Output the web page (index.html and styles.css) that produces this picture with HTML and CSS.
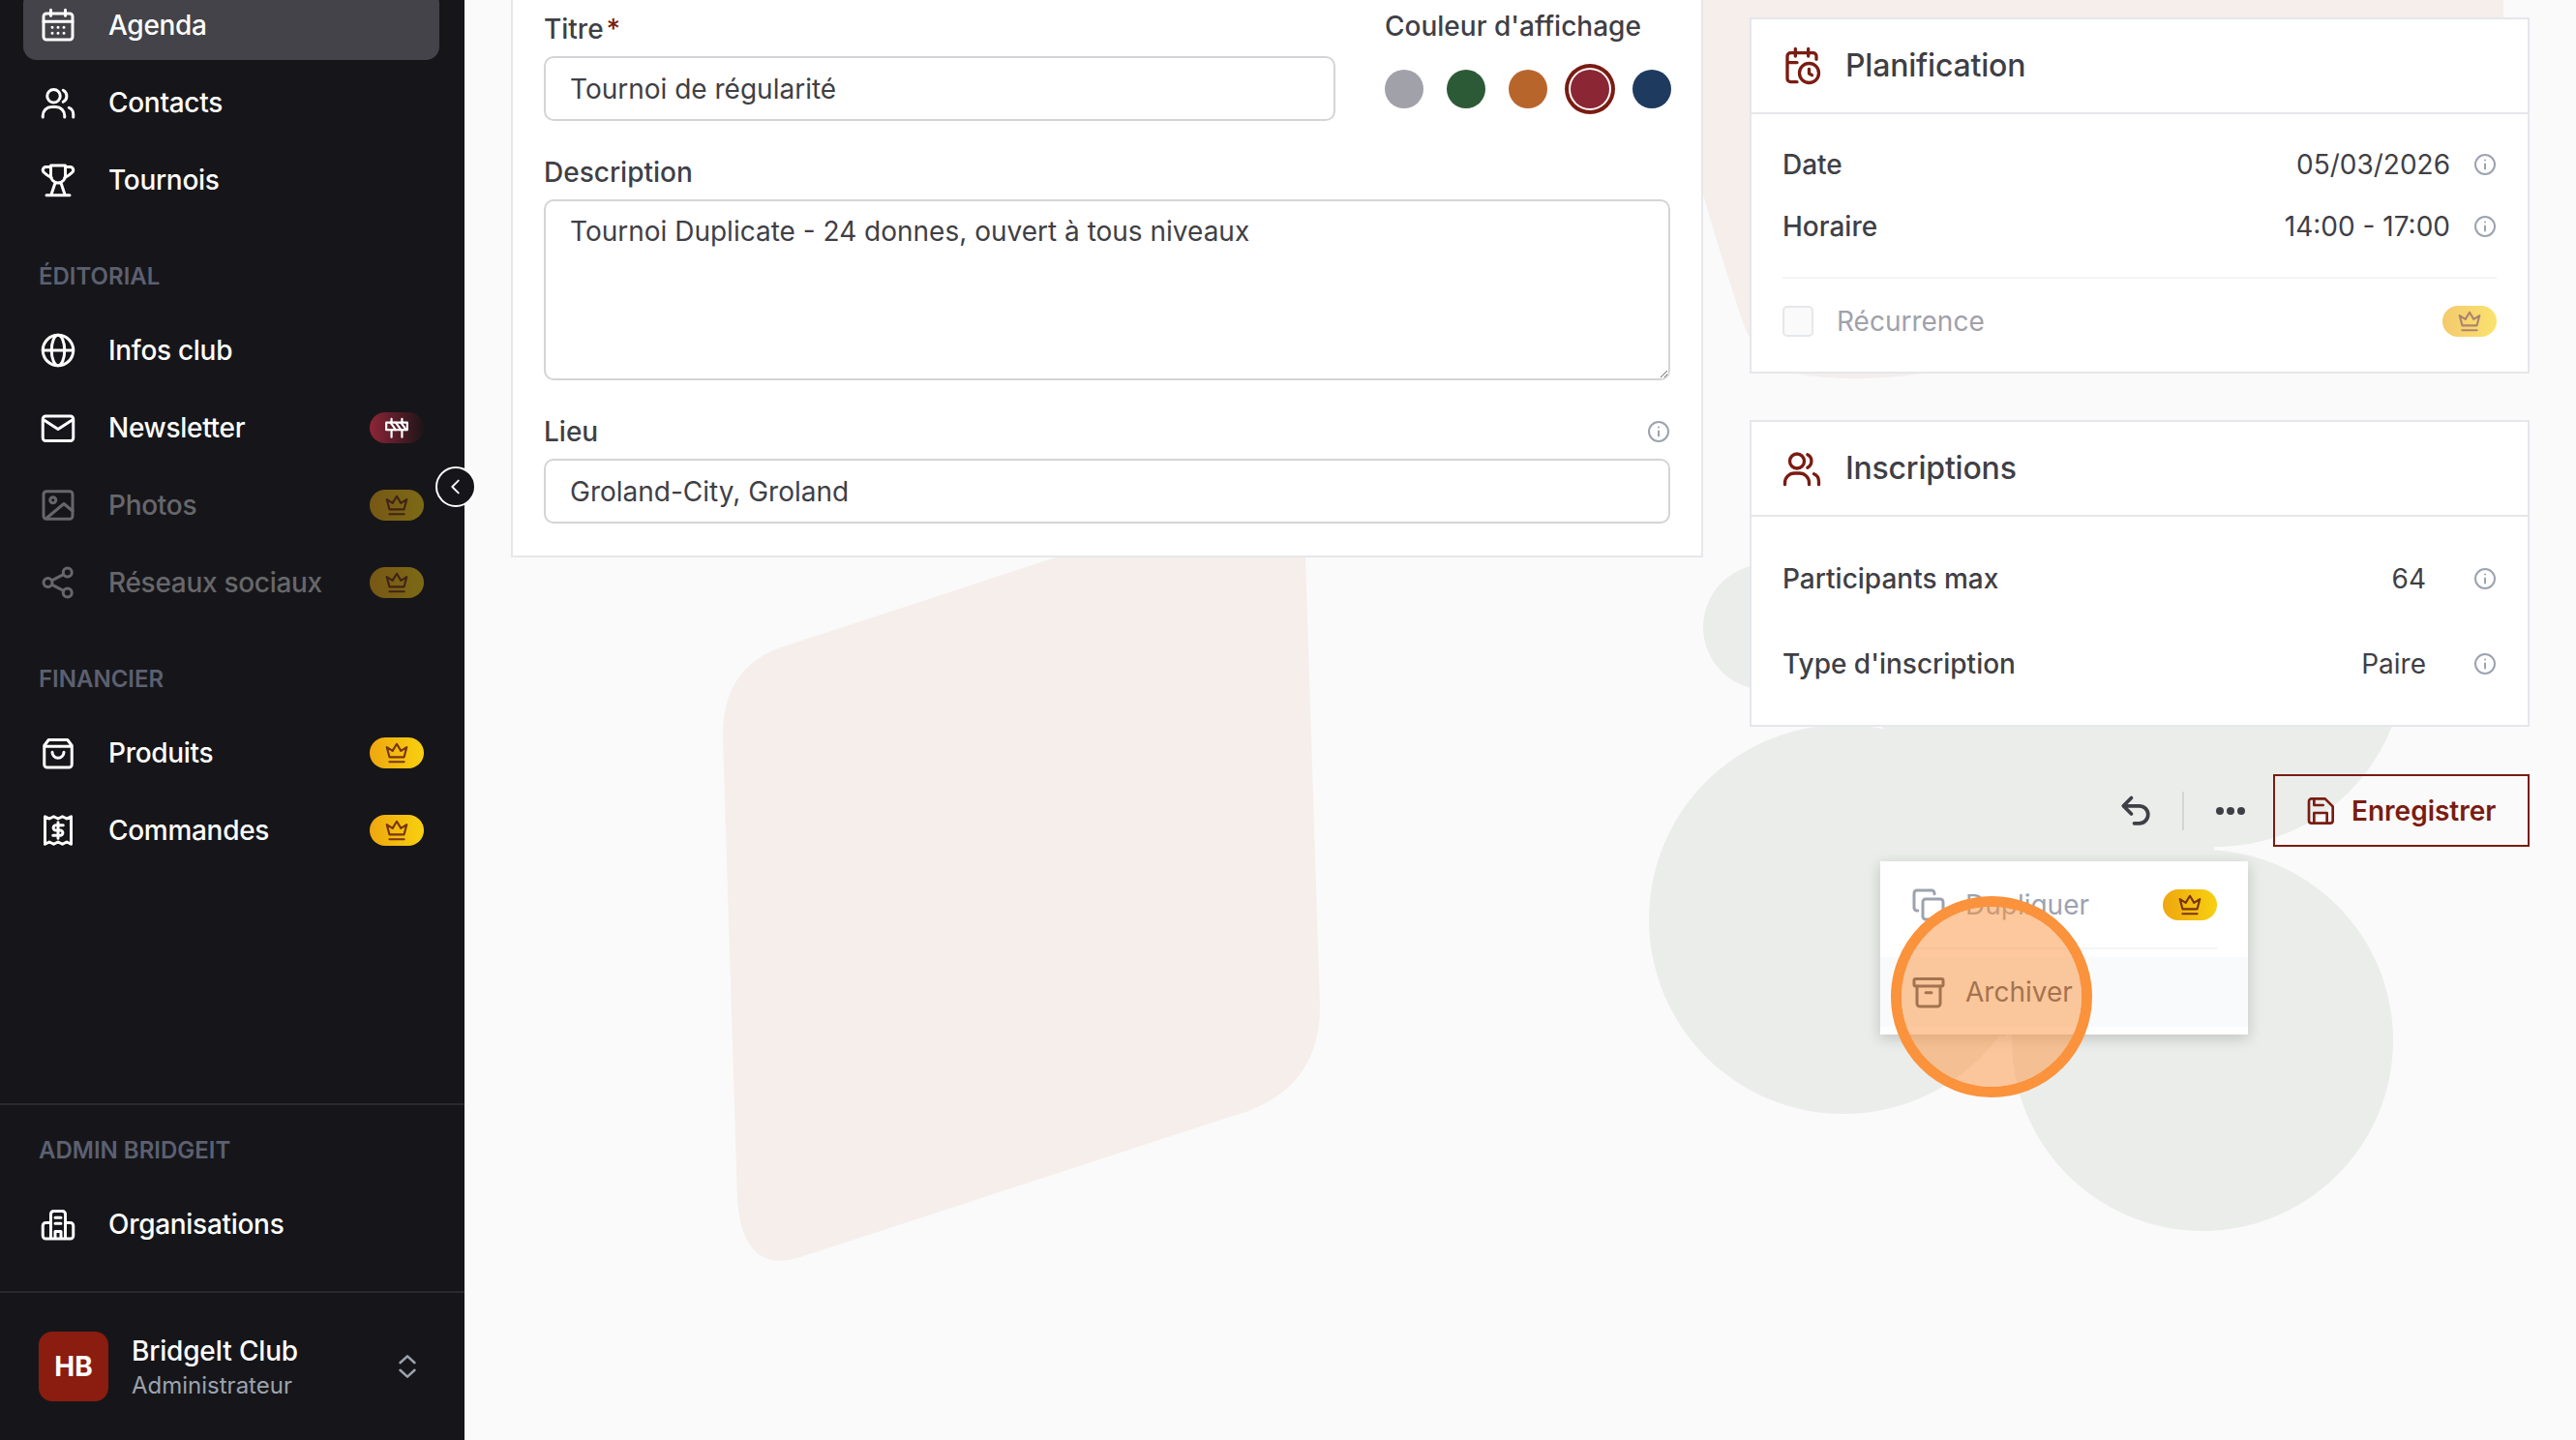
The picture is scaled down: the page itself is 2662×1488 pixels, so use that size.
FILE: index.html
```html
<!DOCTYPE html>
<html lang="fr">
<head>
  <meta charset="utf-8">
  <title>Tournoi de régularité - Agenda</title>
  <link rel="stylesheet" href="styles.css">
</head>

<body>
  <svg class="icon-defs" width="0" height="0">
    <symbol id="i-calendar" viewBox="0 0 24 24"><rect x="2" y="4" width="20" height="18" rx="2"/><path d="M7 1.500v4M17 1.500v4M2 9.500h20M8 13.500h.01M12 13.500h.01M16 13.500h.01M8 17.500h.01M12 17.500h.01M16 17.500h.01"/></symbol>
    <symbol id="i-users" viewBox="0 0 24 24"><circle cx="9" cy="7.500" r="4.500"/><path d="M15.500 3.500a4.500 4.500 0 0 1 0 8M1.500 22v-1a6 6 0 0 1 6-6h3a6 6 0 0 1 6 6v1M19.500 15.500a5 5 0 0 1 3 4.500v2"/></symbol>
    <symbol id="i-trophy" viewBox="0 0 24 24"><path d="M7 2h10v7a5 5 0 0 1-10 0zM7 3H4a2.200 2.200 0 0 0-1.500 4C4 8.500 5.500 9.300 7.500 10.500M17 3h3a2.200 2.200 0 0 1 1.500 4c-1.500 1.500-3 2.300-5 3.500M10 14l-2.500 7.500M14 14l2.500 7.500M4 22.500h16"/></symbol>
    <symbol id="i-globe" viewBox="0 0 24 24"><circle cx="12" cy="12" r="10.500"/><ellipse cx="12" cy="12" rx="4.500" ry="10.500"/><path d="M1.500 12h21"/></symbol>
    <symbol id="i-mail" viewBox="0 0 24 24"><rect x="1.500" y="4" width="21" height="17" rx="2"/><path d="M2 6.500l10 6.500 10-6.500"/></symbol>
    <symbol id="i-image" viewBox="0 0 24 24"><rect x="2" y="2.500" width="20" height="19" rx="2"/><circle cx="8.500" cy="8.500" r="2"/><path d="M4 21l12-10 6 5"/></symbol>
    <symbol id="i-share" viewBox="0 0 24 24"><circle cx="18.500" cy="5" r="3"/><circle cx="5" cy="12" r="3"/><circle cx="18.500" cy="19" r="3"/><path d="M7.700 10.600l8-4.200M7.700 13.400l8 4.200"/></symbol>
    <symbol id="i-bag" viewBox="0 0 24 24"><path d="M5.500 3h13l3 4v13a2 2 0 0 1-2 2h-15a2 2 0 0 1-2-2V7zM2.500 7.500h19M8 11.500a4 4 0 0 0 8 0"/></symbol>
    <symbol id="i-receipt" viewBox="0 0 24 24"><path d="M3 2.500l3 1.500 3-1.500 3 1.500 3-1.500 3 1.500 3-1.500v19l-3-1.500-3 1.500-3-1.500-3 1.500-3-1.500-3 1.500zM15.500 8.500h-5a1.750 1.750 0 0 0 0 3.500h3a1.750 1.750 0 0 1 0 3.500h-5M12 6.500v11"/></symbol>
    <symbol id="i-building" viewBox="0 0 24 24"><path d="M7 22V5a2 2 0 0 1 2-2h6a2 2 0 0 1 2 2v17M7 11H3.500a2 2 0 0 0-2 2v7a2 2 0 0 0 2 2h17a2 2 0 0 0 2-2v-7a2 2 0 0 0-2-2H17M10 7.500h4M10 11.500h4M10 22v-5h4v5"/></symbol>
    <symbol id="i-chevrons" viewBox="0 0 24 24"><path d="M6 9l6-5.500L18 9M6 15l6 5.500 6-5.500"/></symbol>
    <symbol id="i-crown" viewBox="0 0 24 24"><path d="M5 16L2.500 6.500 8 10l4-6.500 4 6.500 5.500-3.500L19 16zM5 20.500h14"/></symbol>
    <symbol id="i-barrier" viewBox="0 0 24 24"><rect x="2" y="7" width="20" height="7"/><path d="M7 3.500V7M17 3.500V7M7 14v7M17 14v7M6 7l5 7M11 7l5 7M16 7l5 7"/></symbol>
    <symbol id="i-info" viewBox="0 0 24 24"><circle cx="12" cy="12" r="10"/><path d="M12 11.500v5M12 7.500h.01"/></symbol>
    <symbol id="i-undo" viewBox="0 0 24 24"><path d="M9 14L3.500 8.500 9 3M4 8.500h10.500a6 6 0 0 1 0 12H11"/></symbol>
    <symbol id="i-save" viewBox="0 0 24 24"><path d="M5 2.500h10.500l6 6V19.500a2 2 0 0 1-2 2H5a2 2 0 0 1-2-2v-15a2 2 0 0 1 2-2zM7 21.500v-8h10v8M7 2.500v5h7"/></symbol>
    <symbol id="i-copy" viewBox="0 0 24 24"><rect x="8" y="8" width="14" height="14" rx="2"/><path d="M4.500 16H4a2 2 0 0 1-2-2V4a2 2 0 0 1 2-2h10a2 2 0 0 1 2 2v.500"/></symbol>
    <symbol id="i-archive" viewBox="0 0 24 24"><rect x="2" y="3" width="20" height="5" rx="1"/><path d="M4 8v12a2 2 0 0 0 2 2h12a2 2 0 0 0 2-2V8M10 12.500h4"/></symbol>
    <symbol id="i-calclock" viewBox="0 0 24 24"><path d="M21 8V6a2 2 0 0 0-2-2H5a2 2 0 0 0-2 2v14a2 2 0 0 0 2 2h4M16 1.500V6M8 1.500V6M3 10h6"/><circle cx="16.500" cy="16.500" r="6"/><path d="M16.500 14v2.800l1.800 1"/></symbol>
    <symbol id="i-left" viewBox="0 0 24 24"><path d="M15 5l-7 7 7 7"/></symbol>
  </svg>

  <svg class="backdrop" viewBox="0 0 2662 1488" width="2662" height="1488">
    <path class="blob-pink" d="M1094 575 L807 669 Q747 690 747 760 L762 1240 Q768 1320 830 1298 L1290 1148 Q1364 1120 1364 1040 L1349 575 Z"/>
    <path class="blob-pink" d="M1740 0 L2587 0 L2587 30 L2100 360 Q1950 405 1850 385 Q1815 375 1800 330 Q1770 240 1740 130 Z"/>
    <g class="blob-grey">
      <circle cx="1825" cy="648" r="65"/>
      <circle cx="1905" cy="950" r="201"/>
      <circle cx="2276" cy="1075" r="197"/>
      <circle cx="2290" cy="680" r="195"/>
      <path d="M1951 762 L1942 745 L2300 620 L2288 878 L2200 940 L2070 1072 L1950 950 Z"/>
    </g>
  </svg>

  <div class="app">
    <aside class="sidebar">
      <nav class="menu">
        <a class="item active"><svg class="icon"><use href="#i-calendar"/></svg>Agenda</a>
        <a class="item"><svg class="icon"><use href="#i-users"/></svg>Contacts</a>
        <a class="item"><svg class="icon"><use href="#i-trophy"/></svg>Tournois</a>

        <p class="menu-title">ÉDITORIAL</p>
        <a class="item"><svg class="icon"><use href="#i-globe"/></svg>Infos club</a>
        <a class="item"><svg class="icon"><use href="#i-mail"/></svg>Newsletter
          <span class="badge badge-wip"><svg><use href="#i-barrier"/></svg></span></a>
        <a class="item locked"><svg class="icon"><use href="#i-image"/></svg>Photos
          <span class="badge"><svg><use href="#i-crown"/></svg></span></a>
        <a class="item locked"><svg class="icon"><use href="#i-share"/></svg>Réseaux sociaux
          <span class="badge"><svg><use href="#i-crown"/></svg></span></a>

        <p class="menu-title">FINANCIER</p>
        <a class="item"><svg class="icon"><use href="#i-bag"/></svg>Produits
          <span class="badge"><svg><use href="#i-crown"/></svg></span></a>
        <a class="item"><svg class="icon"><use href="#i-receipt"/></svg>Commandes
          <span class="badge"><svg><use href="#i-crown"/></svg></span></a>
      </nav>

      <div class="admin">
        <p class="menu-title">ADMIN BRIDGEIT</p>
        <a class="item"><svg class="icon"><use href="#i-building"/></svg>Organisations</a>
      </div>

      <div class="account">
        <span class="avatar">HB</span>
        <div class="account-text">
          <strong>BridgeIt Club</strong>
          <small>Administrateur</small>
        </div>
        <svg class="icon chevrons"><use href="#i-chevrons"/></svg>
      </div>

      <button class="collapse"><svg><use href="#i-left"/></svg></button>
    </aside>

    <main class="content">
      <section class="card form-card">
        <div class="form-top">
          <div class="field field-title">
            <label>Titre<span class="req">*</span></label>
            <input class="input" type="text" value="Tournoi de régularité">
          </div>
          <div class="colors">
            <label>Couleur d'affichage</label>
            <div class="swatches">
              <span class="swatch sw-grey"></span>
              <span class="swatch sw-green"></span>
              <span class="swatch sw-orange"></span>
              <span class="swatch sw-red selected"></span>
              <span class="swatch sw-blue"></span>
            </div>
          </div>
        </div>
        <div class="field">
          <label>Description</label>
          <textarea class="input area">Tournoi Duplicate - 24 donnes, ouvert à tous niveaux</textarea>
        </div>
        <div class="field">
          <label class="label-row">Lieu <svg class="info"><use href="#i-info"/></svg></label>
          <input class="input" type="text" value="Groland-City, Groland">
        </div>
      </section>

      <div class="side">
        <section class="card">
          <h2 class="card-head"><svg class="icon"><use href="#i-calclock"/></svg>Planification</h2>
          <div class="card-body plan">
            <div class="row"><span>Date</span><span class="val">05/03/2026</span><svg class="info"><use href="#i-info"/></svg></div>
            <div class="row"><span>Horaire</span><span class="val">14:00 - 17:00</span><svg class="info"><use href="#i-info"/></svg></div>
            <hr>
            <div class="row recur">
              <span class="check"></span><span>Récurrence</span>
              <span class="badge badge-small"><svg><use href="#i-crown"/></svg></span>
            </div>
          </div>
        </section>

        <section class="card">
          <h2 class="card-head"><svg class="icon"><use href="#i-users"/></svg>Inscriptions</h2>
          <div class="card-body signup">
            <div class="row"><span>Participants max</span><span class="val">64</span><svg class="info"><use href="#i-info"/></svg></div>
            <div class="row"><span>Type d'inscription</span><span class="val">Paire</span><svg class="info"><use href="#i-info"/></svg></div>
          </div>
        </section>

        <div class="actions">
          <svg class="icon"><use href="#i-undo"/></svg>
          <span class="sep"></span>
          <svg class="icon dots" viewBox="0 0 36 36"><circle cx="7" cy="18" r="4"/><circle cx="18" cy="18" r="4"/><circle cx="29" cy="18" r="4"/></svg>
          <button class="save"><svg class="icon"><use href="#i-save"/></svg>Enregistrer</button>

          <div class="dropdown">
            <div class="drop-row muted">
              <svg class="icon"><use href="#i-copy"/></svg>Dupliquer
              <span class="badge"><svg><use href="#i-crown"/></svg></span>
            </div>
            <hr>
            <div class="drop-row hover">
              <svg class="icon"><use href="#i-archive"/></svg>Archiver
            </div>
          </div>
        </div>
      </div>
    </main>
  </div>

  <div class="click-marker"></div>
</body>
</html>
```

FILE: styles.css
```css
:root {
  --dark: #16161a;
  --text: #3f3f46;
  --border: #e5e7eb;
  --brand: #7a1c12;
  --muted: #9ca3af;
}

* {
  box-sizing: border-box;
}

html, body {
  margin: 0;
  height: 100%;
  overflow: hidden;
}

body {
  position: relative;
  font-family: Inter, "Noto Sans", sans-serif;
  font-size: 28px;
  line-height: 40px;
  color: var(--text);
  background: #fafafa;
}

.icon-defs {
  position: absolute;
}

symbol {
  fill: none;
  stroke: currentColor;
  stroke-width: 2;
  stroke-linecap: round;
  stroke-linejoin: round;
}

#i-undo {
  stroke-width: 2.5;
}

.backdrop {
  position: absolute;
  top: 0;
  left: 0;
}

.blob-pink {
  fill: #f5eeeb;
}

.blob-grey {
  fill: #ebedeb;
}

.app {
  position: relative;
  display: flex;
  height: 1488px;
}

.icon {
  width: 36px;
  height: 36px;
  flex: none;
}

/* sidebar */
.sidebar {
  position: relative;
  display: flex;
  flex-direction: column;
  width: 480px;
  flex: none;
  background: var(--dark);
  color: #fff;
}

.menu {
  display: flex;
  flex-direction: column;
  gap: 8px;
  margin-top: -10px;
  padding: 0 26px 0 24px;
}

.menu-title {
  margin: 40px 16px 16px;
  font-size: 24px;
  line-height: 32px;
  font-weight: 600;
  color: #5c6070;
}

.item {
  display: flex;
  align-items: center;
  gap: 34px;
  height: 72px;
  padding: 0 16px 0 18px;
  border-radius: 14px;
  font-weight: 500;
  letter-spacing: -.3px;
}

.item.active {
  background: #434349;
}

.item.locked {
  color: #67676b;
}

.badge {
  display: flex;
  align-items: center;
  justify-content: center;
  width: 56px;
  height: 32px;
  margin-left: auto;
  border-radius: 16px;
  background: linear-gradient(90deg, #eea70f, #f8d00f);
  color: #78350f;
}

.badge svg {
  width: 26px;
  height: 26px;
}

.locked .badge {
  opacity: .45;
}

.badge-wip {
  background: linear-gradient(90deg, #8f2537, #1d1518);
  color: #fff;
}

.admin {
  margin-top: auto;
  padding: 0 26px 33px 24px;
  border-top: 2px solid #2a2a2e;
}

.admin .menu-title {
  margin: 31px 16px 24px;
}

.account {
  display: flex;
  align-items: center;
  height: 154px;
  padding: 0 44px 0 40px;
  border-top: 2px solid #2a2a2e;
}

.avatar {
  display: flex;
  align-items: center;
  justify-content: center;
  width: 72px;
  height: 72px;
  border-radius: 14px;
  background: #8b1c10;
  font-weight: 700;
}

.account-text {
  display: flex;
  flex-direction: column;
  margin-left: 24px;
}

.account-text strong {
  font-weight: 500;
  line-height: 38px;
  letter-spacing: -.2px;
}

.account-text small {
  margin-top: 1px;
  font-size: 24px;
  line-height: 32px;
  color: #9ca3af;
}

.chevrons {
  margin-left: auto;
  width: 30px;
  height: 30px;
  color: #9ca3af;
}

.collapse {
  position: absolute;
  top: 482px;
  left: 450px;
  display: flex;
  align-items: center;
  justify-content: center;
  width: 42px;
  height: 42px;
  padding: 0;
  border: 2px solid #fff;
  border-radius: 50%;
  background: var(--dark);
  color: #fff;
}

.collapse svg {
  width: 22px;
  height: 22px;
}

/* main */
.content {
  display: flex;
  align-items: flex-start;
  gap: 48px;
  flex: 1;
  padding: 0 48px;
}

.card {
  border: 2px solid var(--border);
  background: #fff;
}

.form-card {
  display: flex;
  flex-direction: column;
  gap: 33px;
  width: 1232px;
  flex: none;
  margin-top: -20px;
  padding: 28px 32px 33px 32px;
}

.form-top {
  display: flex;
  gap: 51px;
}

.field label,
.colors label {
  display: block;
  margin-bottom: 8px;
  font-weight: 500;
}

.field-title {
  width: 818px;
  flex: none;
}

.req {
  margin-left: 3px;
  color: var(--brand);
}

.input {
  display: block;
  width: 100%;
  height: 67px;
  padding: 0 25px;
  border: 2px solid #d4d4d8;
  border-radius: 10px;
  background: #fff;
  font: inherit;
  color: var(--text);
}

.area {
  height: 187px;
  padding-top: 11px;
}

.label-row {
  display: flex !important;
  align-items: center;
  justify-content: space-between;
}

.info {
  width: 24px;
  height: 24px;
  flex: none;
  color: var(--muted);
}

.colors {
  margin-top: -3px;
}

.colors label {
  margin-bottom: 25px;
}

.swatches {
  display: flex;
  gap: 24px;
}

.swatch {
  width: 40px;
  height: 40px;
  border-radius: 50%;
}

.sw-grey { background: #a1a1aa; }
.sw-green { background: #2d5a36; }
.sw-orange { background: #b8652c; }
.sw-red { background: #8b2635; }
.sw-blue { background: #1f3a5f; }

.selected {
  box-shadow: 0 0 0 2px #fff, 0 0 0 6px var(--brand);
}

.side {
  display: flex;
  flex-direction: column;
  gap: 48px;
  width: 806px;
  flex: none;
  margin-top: 18px;
}

.actions {
  margin-top: 1px;
}

.card-head {
  display: flex;
  align-items: center;
  gap: 25px;
  height: 98px;
  margin: 0;
  padding: 0 32px;
  border-bottom: 2px solid var(--border);
  font-size: 32px;
  font-weight: 500;
  letter-spacing: -.2px;
}

.card-head .icon {
  width: 40px;
  height: 40px;
  color: var(--brand);
}

.row {
  display: flex;
  align-items: center;
  justify-content: space-between;
  font-weight: 500;
}

.val {
  margin-left: auto;
  font-weight: 400;
}

.card-body {
  padding: 0 32px;
}

.plan {
  padding-top: 32px;
  padding-bottom: 36px;
}

.plan .row + .row {
  margin-top: 24px;
}

.plan .val {
  margin-right: 24px;
}

.plan hr {
  margin: 32px 0 28px;
  border: 0;
  border-top: 2px solid #f3f4f6;
}

.plan .recur {
  justify-content: flex-start;
  margin-top: 0;
  height: 32px;
  font-weight: 400;
  color: #a1a1aa;
}

.check {
  width: 32px;
  height: 32px;
  margin-right: 24px;
  border: 2px solid var(--border);
  border-radius: 5px;
  background: #fafafa;
}

.recur .badge {
  opacity: .6;
}

.signup {
  padding-top: 44px;
  padding-bottom: 43px;
}

.signup .row + .row {
  margin-top: 48px;
}

.signup .val {
  margin-right: 49px;
}

/* actions */
.actions {
  position: relative;
  display: flex;
  align-items: center;
  justify-content: flex-end;
  gap: 30px;
  height: 75px;
}

.sep {
  width: 2px;
  height: 40px;
  background: #d4d4d8;
}

.dots {
  margin-right: -4px;
  fill: currentColor;
}

.save {
  display: flex;
  align-items: center;
  gap: 16px;
  width: 265px;
  height: 75px;
  padding: 0 31px;
  border: 2px solid var(--brand);
  background: transparent;
  font: inherit;
  font-weight: 600;
  color: var(--brand);
}

.save .icon {
  width: 32px;
  height: 32px;
}

.dropdown {
  position: absolute;
  top: 90px;
  right: 291px;
  width: 380px;
  height: 179px;
  padding-bottom: 9px;
  background: #fff;
  box-shadow: 0 4px 14px rgba(0, 0, 0, .18);
}

.dropdown hr {
  margin: 0 32px 8px;
  border: 0;
  border-top: 2px solid #f3f4f6;
}

.drop-row {
  display: flex;
  align-items: center;
  gap: 20px;
  height: 89px;
  padding: 0 32px;
}

.drop-row.muted {
  color: var(--muted);
}

.drop-row.hover {
  height: 72px;
  background: #f9fafb;
  color: #4b5563;
}

/* click highlight of the recording */
.click-marker {
  position: absolute;
  top: 926px;
  left: 1954px;
  width: 208px;
  height: 208px;
  border: 11px solid #fb923c;
  border-radius: 50%;
  background: rgba(251, 146, 60, .5);
  background-clip: padding-box;
}
```
